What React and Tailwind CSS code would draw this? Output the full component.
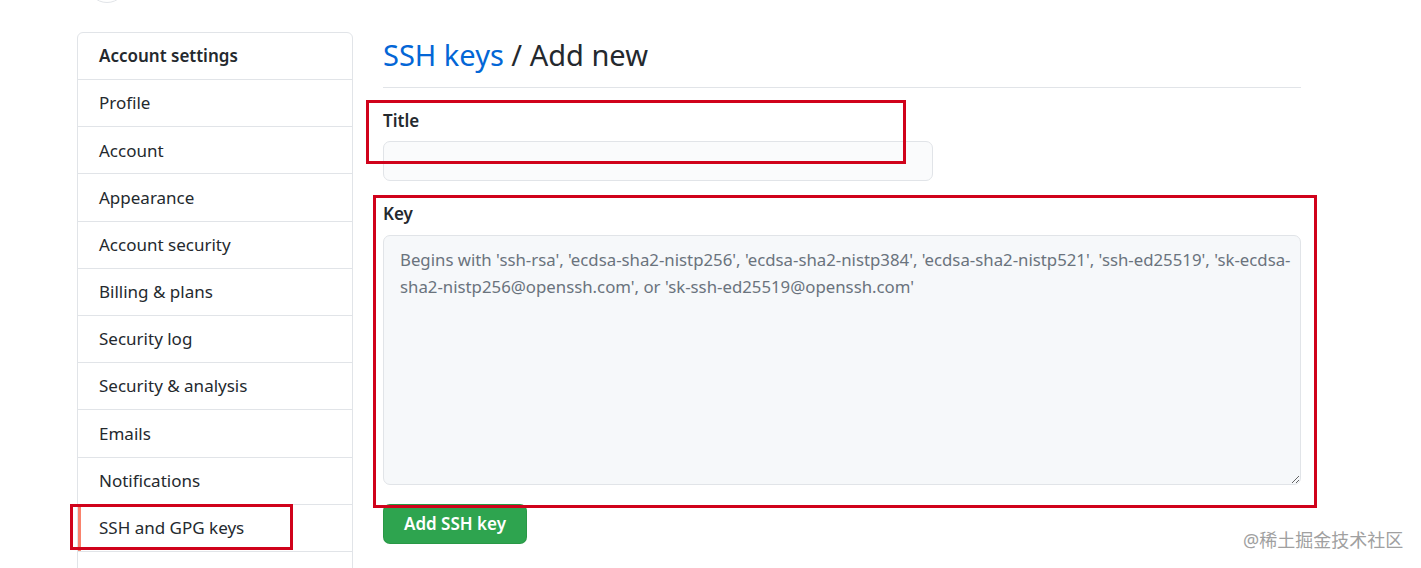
import React from "react";

const items = [
  "Profile",
  "Account",
  "Appearance",
  "Account security",
  "Billing & plans",
  "Security log",
  "Security & analysis",
  "Emails",
  "Notifications",
  "SSH and GPG keys",
  "",
];

export default function App() {
  return (
    <div
      className="relative h-[568px] w-[1421px] overflow-hidden bg-white text-[#24292e]"
      style={{ fontFamily: '"Noto Sans", "Open Sans", sans-serif' }}
    >
      {/* top partial avatar */}
      <div className="flex h-[32px] items-start">
        <div className="ml-[87px] mt-[-37px] h-[40px] w-[40px] shrink-0 rounded-full border border-[#e1e4e8] bg-white" />
      </div>

      <div className="flex items-start pl-[77px]">
        {/* sidebar */}
        <nav className="flex w-[276px] shrink-0 flex-col rounded-[6px] border border-[#e1e4e8] text-[17px]">
          <div className="flex h-[46px] items-center px-[21px] font-semibold">Account settings</div>
          {items.map((it, i) => (
            <div
              key={i}
              className={
                it === "SSH and GPG keys"
                  ? "flex h-[47.2px] items-center border-t border-l-[3px] border-t-[#e1e4e8] border-l-[#f9826c] pl-[18px]"
                  : "flex h-[47.2px] items-center border-t border-[#e1e4e8] px-[21px]"
              }
            >
              {it}
            </div>
          ))}
        </nav>

        {/* main */}
        <main className="ml-[30px] flex w-[918px] flex-col items-start">
          <h1 className="w-full border-b border-[#e1e4e8] pb-[10px] text-[29px] leading-[45px] font-normal">
            <span className="text-[#0366d6]">SSH keys</span> / Add new
          </h1>

          <label className="mt-[20px] block text-[17px] leading-[26px] font-semibold">Title</label>
          <input
            className="mt-[7px] block h-[40px] w-[550px] rounded-[7px] border border-[#e1e4e8] bg-[#fafbfc] px-[10px] text-[17px] outline-none"
            type="text"
          />

          <label className="mt-[20px] block text-[17px] leading-[26px] font-semibold">Key</label>
          <textarea
            className="mt-[8px] block h-[250px] w-[918px] resize-y rounded-[7px] border border-[#e1e4e8] bg-[#f6f8fa] py-[10px] pl-[16px] pr-[6px] text-[16.8px] leading-[27px] outline-none placeholder:text-[#6a737d]"
            placeholder="Begins with 'ssh-rsa', 'ecdsa-sha2-nistp256', 'ecdsa-sha2-nistp384', 'ecdsa-sha2-nistp521', 'ssh-ed25519', 'sk-ecdsa-sha2-nistp256@openssh.com', or 'sk-ssh-ed25519@openssh.com'"
          />

          <button className="mt-[19px] flex h-[40px] w-[144px] items-center justify-center rounded-[7px] border border-[#22863a]/40 bg-[#2ea44f] text-[17px] font-semibold text-white">
            Add SSH key
          </button>
        </main>
      </div>

      {/* red annotation boxes */}
      <div className="pointer-events-none absolute left-[366px] top-[100px] h-[64px] w-[540px] border-[3px] border-[#d0021b]" />
      <div className="pointer-events-none absolute left-[373px] top-[195px] h-[313px] w-[944px] border-[3px] border-[#d0021b]" />
      <div className="pointer-events-none absolute left-[70px] top-[504px] h-[46px] w-[223px] border-[3px] border-[#d0021b]" />

      {/* watermark */}
      <div
        className="absolute left-[1243px] top-[527px] text-[18px] leading-[26px] text-[#a0a0a0]"
        style={{ fontFamily: '"Noto Sans", "Noto Sans CJK SC", sans-serif' }}
      >
        @稀土掘金技术社区
      </div>
    </div>
  );
}
